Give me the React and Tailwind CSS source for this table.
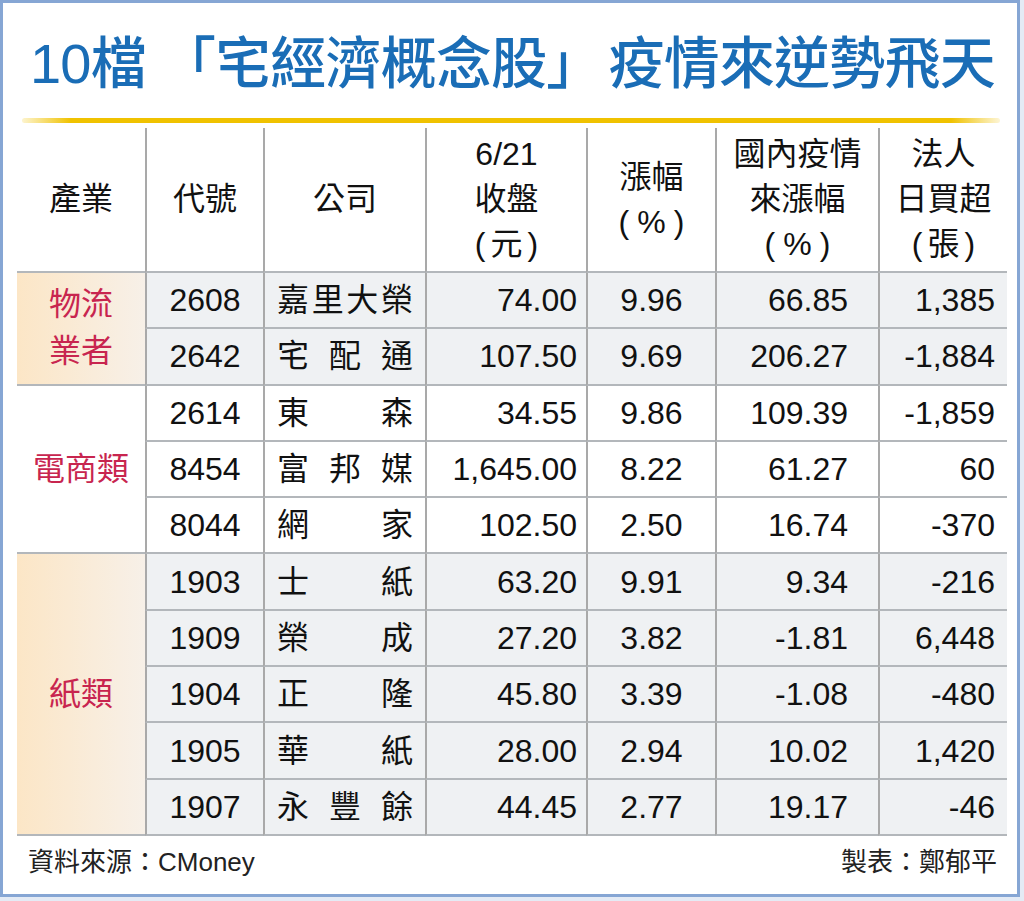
const groups = [
  {
    label: ["物流", "業者"],
    tinted: true,
    span: "row-span-2",
    rows: [
      { code: "2608", name: "嘉里大榮", close: "74.00", chg: "9.96", since: "66.85", net: "1,385" },
      { code: "2642", name: "宅配通", close: "107.50", chg: "9.69", since: "206.27", net: "-1,884" },
    ],
  },
  {
    label: ["電商類"],
    tinted: false,
    span: "row-span-3",
    rows: [
      { code: "2614", name: "東森", close: "34.55", chg: "9.86", since: "109.39", net: "-1,859" },
      { code: "8454", name: "富邦媒", close: "1,645.00", chg: "8.22", since: "61.27", net: "60" },
      { code: "8044", name: "網家", close: "102.50", chg: "2.50", since: "16.74", net: "-370" },
    ],
  },
  {
    label: ["紙類"],
    tinted: true,
    span: "row-span-5",
    rows: [
      { code: "1903", name: "士紙", close: "63.20", chg: "9.91", since: "9.34", net: "-216" },
      { code: "1909", name: "榮成", close: "27.20", chg: "3.82", since: "-1.81", net: "6,448" },
      { code: "1904", name: "正隆", close: "45.80", chg: "3.39", since: "-1.08", net: "-480" },
      { code: "1905", name: "華紙", close: "28.00", chg: "2.94", since: "10.02", net: "1,420" },
      { code: "1907", name: "永豐餘", close: "44.45", chg: "2.77", since: "19.17", net: "-46" },
    ],
  },
];

// unit line gets wide-set parens, like the print layout
const headers = [
  { lines: ["產業"] },
  { lines: ["代號"] },
  { lines: ["公司"] },
  { lines: ["6/21", "收盤"], unit: "元" },
  { lines: ["漲幅"], unit: "%" },
  { lines: ["國內疫情", "來漲幅"], unit: "%" },
  { lines: ["法人", "日買超"], unit: "張" },
];

const line = "border-[#b3b7bb]";
const vline = "border-l-2 border-l-[#a9a9a9]";

function HeaderCell({ head, first }) {
  return (
    <div
      className={`flex flex-col items-center justify-center border-b-2 ${line} text-[32px] leading-[45px] text-[#111] ${first ? "" : vline}`}
    >
      {head.lines.map((l) => (
        <span key={l}>{l}</span>
      ))}
      {head.unit && (
        <span className="flex items-center">
          <span className={head.unit === "%" ? "mr-[8px]" : "mr-[5px]"}>(</span>
          <span>{head.unit}</span>
          <span className={head.unit === "%" ? "ml-[8px]" : "ml-[5px]"}>)</span>
        </span>
      )}
    </div>
  );
}

function DataRow({ row, tinted }) {
  const bg = tinted ? "bg-[#eff1f3]" : "bg-white";
  const cell = `flex items-center border-b-2 ${line} ${vline} ${bg} text-[32px] text-[#111]`;
  return (
    <>
      <div className={`${cell} justify-center`}>{row.code}</div>
      <div className={`${cell} justify-between pl-[12px] pr-[12px]`}>
        {row.name.split("").map((ch, i) => (
          <span key={i}>{ch}</span>
        ))}
      </div>
      <div className={`${cell} justify-end pr-[9px]`}>{row.close}</div>
      <div className={`${cell} justify-center`}>{row.chg}</div>
      <div className={`${cell} justify-end pr-[30px]`}>{row.since}</div>
      <div className={`${cell} justify-end pr-[12px]`}>{row.net}</div>
    </>
  );
}

function Group({ group }) {
  return (
    <>
      <div
        className={`${group.span} flex flex-col items-center justify-center border-b-2 ${line} text-[32px] leading-[47px] text-[#c8254f] ${
          group.tinted ? "bg-[linear-gradient(90deg,#fce6c6,#f7f0e8)]" : "bg-white"
        }`}
      >
        {group.label.map((l) => (
          <span key={l}>{l}</span>
        ))}
      </div>
      {group.rows.map((r) => (
        <DataRow key={r.code} row={r} tinted={group.tinted} />
      ))}
    </>
  );
}

export default function App() {
  return (
    <div className="h-[901px] w-[1024px] bg-[#e4ebf5] font-['Liberation_Sans','Noto_Sans_CJK_TC',sans-serif]">
      <div className="flex h-[897px] w-[1020px] flex-col border-[3px] border-[#86a6d4] bg-white pl-[14px] pr-[10px]">
        <h1 className="ml-[13px] mt-[28px] flex h-[66px] items-center whitespace-nowrap text-[56px] font-medium leading-[66px] tracking-[-0.8px] text-[#1a6db6]">
          <span>10檔</span>
          <span className="ml-[14px]">「宅經濟概念股」</span>
          <span className="ml-[7px]">疫情來逆勢飛天</span>
        </h1>
        <div className="ml-[5px] mr-[7px] mt-[21px] h-[5px] rounded-full bg-[linear-gradient(90deg,#fdf4cf_0%,#f0c200_5%,#f0c200_95%,#fdf5d6_100%)]" />

        <div className="mt-[5px] grid grid-cols-[128px_118px_162px_161px_129px_163px_129px] grid-rows-[145px_repeat(10,56.3px)]">
          {headers.map((h, i) => (
            <HeaderCell key={i} head={h} first={i === 0} />
          ))}
          {groups.map((g) => (
            <Group key={g.label.join("")} group={g} />
          ))}
        </div>

        <div className="flex flex-1 items-center justify-between pb-[4px] pl-[11px] pr-[10px] text-[26px] text-[#222]">
          <span>資料來源：CMoney</span>
          <span>製表：鄭郁平</span>
        </div>
      </div>
    </div>
  );
}
